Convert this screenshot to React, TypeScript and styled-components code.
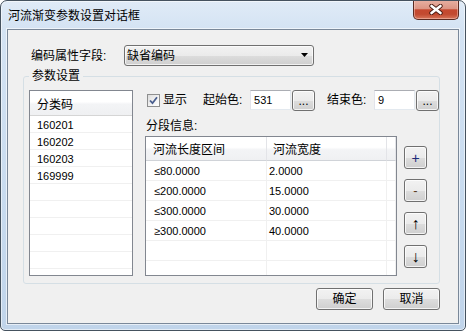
import { Fragment } from "react";
import styled, { createGlobalStyle } from "styled-components";

const GlobalStyle = createGlobalStyle`
  html, body {
    margin: 0;
    padding: 0;
  }
  body {
    width: 466px;
    height: 331px;
    overflow: hidden;
    background: #ffffff;
    font-family: "Liberation Sans", "Noto Sans CJK SC", sans-serif;
    font-size: 12px;
    color: #000;
  }
  * {
    box-sizing: border-box;
  }
`;

const Window = styled.div`
  width: 466px;
  height: 331px;
  border: 1px solid #45525f;
  border-radius: 7px 7px 5px 5px;
  background: linear-gradient(to bottom, #e0ebf7 0px, #d4e3f3 28px, #c8dbef 60%, #c0d4ea 100%);
  box-shadow: inset 0 0 0 1px rgba(255, 255, 255, 0.55);
  padding: 0 6px 6px 6px;
  display: flex;
  flex-direction: column;
  overflow: hidden;
`;

const TitleBar = styled.div`
  height: 28px;
  flex: none;
  display: flex;
  align-items: flex-start;
  justify-content: space-between;
`;

const Title = styled.div`
  margin: 8px 0 0 1px;
  line-height: 14px;
  font-size: 12px;
`;

const CloseButton = styled.div`
  width: 46px;
  height: 20px;
  margin-top: -1px;
  border: 1px solid #5a2a21;
  border-top: none;
  border-radius: 0 0 5px 5px;
  background: linear-gradient(to bottom, #e8b1a3 0%, #dc9584 45%, #c5482f 52%, #c24a30 75%, #d7765b 100%);
  box-shadow: inset 0 0 0 1px rgba(255, 215, 205, 0.45);
  display: flex;
  align-items: center;
  justify-content: center;
`;

const Client = styled.div`
  flex: 1;
  background: #f0f0f0;
  border: 1px solid #7a8899;
  box-shadow: 0 0 0 1px rgba(255, 255, 255, 0.6);
  padding: 15px 18px 0 15px;
  display: flex;
  flex-direction: column;
`;

const FieldRow = styled.div`
  display: flex;
  align-items: center;
  height: 21px;
  margin-left: 8px;
`;

const FieldLabel = styled.span`
  width: 93px;
  line-height: 14px;
`;

const Combo = styled.div`
  width: 190px;
  height: 21px;
  border: 1px solid #707070;
  border-radius: 3px;
  background: linear-gradient(to bottom, #f2f2f2 0%, #ebebeb 50%, #dddddd 51%, #cfcfcf 100%);
  box-shadow: inset 0 0 0 1px rgba(255, 255, 255, 0.7);
  display: flex;
  align-items: center;
  justify-content: space-between;
  padding: 0 4px 0 2px;
  line-height: 14px;
`;

const Group = styled.fieldset`
  margin: 3px 0 0 0;
  padding: 7px 0 7px 5px;
  border: 1px solid #d5dfe5;
  border-radius: 3px;
  min-width: 0;
`;

const GroupTitle = styled.legend`
  padding: 0 3px;
  line-height: 14px;
  font-size: 12px;
`;

const GroupBody = styled.div`
  display: flex;
  align-items: flex-start;
`;

const ListBox = styled.div`
  width: 104px;
  height: 186px;
  border: 1px solid #828790;
  background: #fff;
  overflow: hidden;
`;

const ListHead = styled.div`
  height: 25px;
  border-bottom: 1px solid #d5d5d5;
  background: linear-gradient(to bottom, #ffffff 0%, #ffffff 45%, #f3f4f6 55%, #eff0f2 100%);
  padding-left: 7px;
  display: flex;
  align-items: center;
  font-size: 12px;
`;

const ListItem = styled.div`
  height: 17px;
  border-bottom: 1px solid #f0f0f0;
  padding: 1px 0 0 7px;
  display: flex;
  align-items: center;
  font-size: 11px;
`;

const RightPane = styled.div`
  flex: 1;
  margin: -1px 0 0 12px;
  display: flex;
  flex-direction: column;
`;

const TopRow = styled.div`
  height: 22px;
  display: flex;
  align-items: center;
  padding-left: 2px;
`;

const Check = styled.span`
  width: 13px;
  height: 13px;
  border: 1px solid #8e8f8f;
  background: linear-gradient(135deg, #dcdcdc 0%, #f4f4f4 60%, #ffffff 100%);
  display: flex;
  align-items: center;
  justify-content: center;
  margin-right: 3px;
`;

const CheckText = styled.span`
  line-height: 14px;
`;

const ColorLabel = styled.span<{ $gap: number }>`
  width: 47px;
  margin-left: ${(p) => p.$gap}px;
  line-height: 14px;
`;

const TextInput = styled.div`
  width: 41px;
  height: 20px;
  background: #fff;
  border: 1px solid #e3e9ef;
  border-top-color: #abadb3;
  border-left-color: #e2e3ea;
  padding-left: 3px;
  display: flex;
  align-items: center;
  font-size: 11px;
`;

const Button = styled.div<{ $w: number; $h: number }>`
  width: ${(p) => p.$w}px;
  height: ${(p) => p.$h}px;
  flex: none;
  border: 1px solid #707070;
  border-radius: 3px;
  background: linear-gradient(to bottom, #f2f2f2 0%, #ebebeb 50%, #dddddd 51%, #cfcfcf 100%);
  box-shadow: inset 0 0 0 1px rgba(255, 255, 255, 0.75);
  display: flex;
  align-items: center;
  justify-content: center;
  font-size: 12px;
  line-height: 14px;
`;

const DotButton = styled(Button)`
  margin-left: 1px;
  padding-top: 2px;
`;

const SectionLabel = styled.div`
  margin: 8px 0 0 1px;
  line-height: 14px;
`;

const TableRow = styled.div`
  display: flex;
  align-items: flex-start;
  margin-top: 3px;
`;

const Table = styled.div`
  width: 252px;
  height: 140px;
  border: 1px solid #828790;
  background: #fff;
  overflow: hidden;
  display: grid;
  grid-template-columns: 121px 120px 1fr;
  grid-template-rows: 24px;
  grid-auto-rows: 20px;
`;

const HeadCell = styled.div<{ $pad: number }>`
  border-right: 1px solid #e3e4e8;
  border-bottom: 1px solid #d0d3d8;
  background: linear-gradient(to bottom, #ffffff 0%, #ffffff 45%, #f3f4f6 55%, #eff0f2 100%);
  padding-left: ${(p) => p.$pad}px;
  display: flex;
  align-items: center;
  font-size: 12px;
`;

const Cell = styled.div<{ $pad: number }>`
  border-right: 1px solid #f0f0f0;
  border-bottom: 1px solid #f0f0f0;
  padding: 1px 0 0 ${(p) => p.$pad}px;
  display: flex;
  align-items: center;
  font-size: 11px;
`;

const SideButtons = styled.div`
  display: flex;
  flex-direction: column;
  gap: 10px;
  margin: 10px 0 0 7px;
`;

const Symbol = styled.span<{ $color: string; $size: number }>`
  color: ${(p) => p.$color};
  font-size: ${(p) => p.$size}px;
  line-height: 14px;
`;

const Footer = styled.div`
  display: flex;
  justify-content: flex-end;
  gap: 10px;
  margin-top: 4px;
`;

const codes = ["160201", "160202", "160203", "169999", "", "", "", "", "", ""];

const segments = [
  ["≤80.0000", "2.0000"],
  ["≤200.0000", "15.0000"],
  ["≤300.0000", "30.0000"],
  ["≥300.0000", "40.0000"],
  ["", ""],
  ["", ""],
];

export default function App() {
  return (
    <>
      <GlobalStyle />
      <Window>
        <TitleBar>
          <Title>河流渐变参数设置对话框</Title>
          <CloseButton>
            <svg width="14" height="11" viewBox="0 0 14 11">
              <path d="M2.5 2 L11.5 9 M11.5 2 L2.5 9" stroke="#4b1b12" strokeWidth="4.4" strokeLinecap="round" fill="none" />
              <path d="M2.5 2 L11.5 9 M11.5 2 L2.5 9" stroke="#ffffff" strokeWidth="2.6" strokeLinecap="round" fill="none" />
            </svg>
          </CloseButton>
        </TitleBar>
        <Client>
          <FieldRow>
            <FieldLabel>编码属性字段:</FieldLabel>
            <Combo>
              <span>缺省编码</span>
              <svg width="8" height="5" viewBox="0 0 8 5">
                <polygon points="0,0 7,0 3.5,4" fill="#000" />
              </svg>
            </Combo>
          </FieldRow>
          <Group>
            <GroupTitle>参数设置</GroupTitle>
            <GroupBody>
              <ListBox>
                <ListHead>分类码</ListHead>
                {codes.map((c, i) => (
                  <ListItem key={i}>{c}</ListItem>
                ))}
              </ListBox>
              <RightPane>
                <TopRow>
                  <Check>
                    <svg width="11" height="11" viewBox="0 0 11 11">
                      <path d="M2 5.5 L4.5 8.2 L9 2.2" stroke="#4a5f8f" strokeWidth="1.8" fill="none" />
                    </svg>
                  </Check>
                  <CheckText>显示</CheckText>
                  <ColorLabel $gap={16}>起始色:</ColorLabel>
                  <TextInput>531</TextInput>
                  <DotButton $w={23} $h={21}>...</DotButton>
                  <ColorLabel $gap={12}>结束色:</ColorLabel>
                  <TextInput>9</TextInput>
                  <DotButton $w={23} $h={21}>...</DotButton>
                </TopRow>
                <SectionLabel>分段信息:</SectionLabel>
                <TableRow>
                  <Table>
                    <HeadCell $pad={7}>河流长度区间</HeadCell>
                    <HeadCell $pad={6}>河流宽度</HeadCell>
                    <HeadCell $pad={0} />
                    {segments.map(([range, width], i) => (
                      <Fragment key={i}>
                        <Cell $pad={8}>{range}</Cell>
                        <Cell $pad={2}>{width}</Cell>
                        <Cell $pad={0} />
                      </Fragment>
                    ))}
                  </Table>
                  <SideButtons>
                    <Button $w={23} $h={23}><Symbol $color="#1b2a78" $size={14}>+</Symbol></Button>
                    <Button $w={23} $h={23}><Symbol $color="#5a3a20" $size={13}>-</Symbol></Button>
                    <Button $w={23} $h={23}><Symbol $color="#000" $size={16}>↑</Symbol></Button>
                    <Button $w={23} $h={23}><Symbol $color="#000" $size={16}>↓</Symbol></Button>
                  </SideButtons>
                </TableRow>
              </RightPane>
            </GroupBody>
          </Group>
          <Footer>
            <Button $w={57} $h={22}>确定</Button>
            <Button $w={57} $h={22}>取消</Button>
          </Footer>
        </Client>
      </Window>
    </>
  );
}
